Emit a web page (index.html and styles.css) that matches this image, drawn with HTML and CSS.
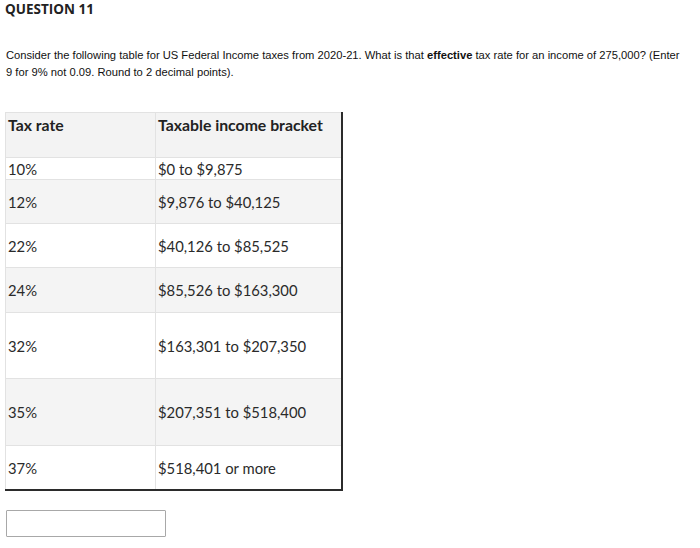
FILE: index.html
```html
<!DOCTYPE html>
<html lang="en">
<head>
<meta charset="utf-8">
<title>Question 11</title>
<link rel="stylesheet" href="styles.css">
</head>
<body>
<div class="page">
  <h1 class="title">QUESTION 11</h1>
  <p class="question">Consider the following table for US Federal Income taxes from 2020-21. What is that <strong>effective</strong> tax rate for an income of 275,000? (Enter 9 for 9% not 0.09. Round to 2 decimal points).</p>
  <table class="brackets">
    <thead>
      <tr class="head"><th class="c1">Tax rate</th><th class="c2">Taxable income bracket</th></tr>
    </thead>
    <tbody>
      <tr class="r-a"><td>10%</td><td>$0 to $9,875</td></tr>
      <tr class="r-b alt"><td>12%</td><td>$9,876 to $40,125</td></tr>
      <tr class="r-b"><td>22%</td><td>$40,126 to $85,525</td></tr>
      <tr class="r-c alt"><td>24%</td><td>$85,526 to $163,300</td></tr>
      <tr class="r-d"><td>32%</td><td>$163,301 to $207,350</td></tr>
      <tr class="r-e alt"><td>35%</td><td>$207,351 to $518,400</td></tr>
      <tr class="r-b last"><td>37%</td><td>$518,401 or more</td></tr>
    </tbody>
  </table>
  <input class="answer" type="text" aria-label="Answer">
</div>
</body>
</html>
```
FILE: styles.css
```css
html, body {
  margin: 0;
  padding: 0;
  background: #ffffff;
}
.page {
  padding: 0 0 0 5px;
  color: #1a1a1a;
}
.title {
  font-family: "Open Sans", "Liberation Sans", sans-serif;
  font-weight: 700;
  font-size: 13.5px;
  line-height: 18px;
  margin: 0;
  padding-top: 0;
  color: #222;
}
.question {
  font-family: "Liberation Sans", Arial, sans-serif;
  font-size: 11.2px;
  line-height: 17px;
  margin: 29px 0 0 1px;
  width: 678px;
  color: #111;
}
.question strong {
  font-weight: 700;
}
.brackets {
  margin-top: 31px;
  border-collapse: collapse;
  width: 338px;
  font-family: Lato, "Open Sans", sans-serif;
  font-size: 14.8px;
  color: #2a2a2a;
  border-top: 1px solid #e0e0e0;
  border-left: 1px solid #e0e0e0;
  border-right: 2px solid #2b2b2b;
  border-bottom: 2px solid #2b2b2b;
}
.brackets th, .brackets td {
  text-align: left;
  padding: 0 0 0 2px;
  border-top: 1px solid #e2e2e2;
  border-left: 1px solid #e2e2e2;
  vertical-align: middle;
}
.brackets th {
  font-weight: 700;
  font-size: 15.8px;
  vertical-align: top;
  padding-top: 2px;
  height: 42px;
  background: #f3f3f3;
  color: #222;
}
.brackets .c1 { width: 147px; }
.brackets tr { background: #ffffff; }
.brackets tr.alt { background: #f4f4f4; }
.brackets .r-a td { height: 21px; }
.brackets .r-b td { height: 43px; }
.brackets .r-c td { height: 44px; }
.brackets .r-d td { height: 65px; }
.brackets .r-e td { height: 66px; }
.answer {
  display: block;
  margin: 19px 0 0 1px;
  width: 160px;
  height: 27px;
  box-sizing: border-box;
  border: 1px solid #a8a8a8;
  border-radius: 1px;
  padding: 0;
  background: #fff;
}
```
